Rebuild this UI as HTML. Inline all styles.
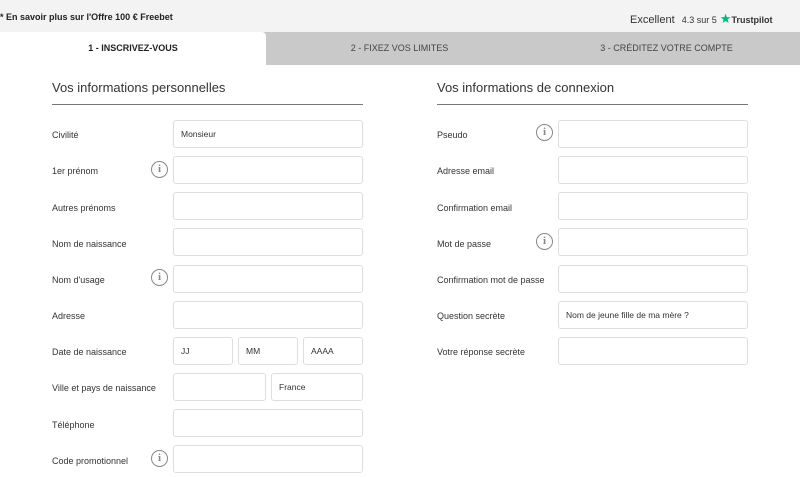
<!DOCTYPE html>
<html><head><meta charset="utf-8"><style>
*{box-sizing:border-box;margin:0;padding:0}
body{width:800px;height:477px;overflow:hidden;background:#fff;font-family:"Liberation Sans",sans-serif;color:#333;position:relative}
.top{position:absolute;left:0;top:0;width:800px;height:32px;background:#f3f3f3}
.promo{position:absolute;left:0;top:12px;font-size:9px;font-weight:bold;color:#222}
.tp{position:absolute;left:630px;top:11px;font-size:11px;color:#333}
.tp small{font-size:9px;margin-left:4px}
.tabs{position:absolute;left:0;top:32px;width:800px;height:33px;background:#c9c9c9}
.tab{position:absolute;top:0;height:33px;line-height:32px;font-size:9px;text-align:center;color:#444}
.tab.a{background:#fff;border-radius:0 4px 0 0;font-weight:bold;color:#222}
h2{position:absolute;font-weight:normal;font-size:13px;color:#333;top:80px}
.line{position:absolute;top:104px;height:1px;width:311px;background:#777}
.lab{position:absolute;font-size:9px;color:#333}
.in{position:absolute;height:28px;border:1px solid #dedede;border-radius:3px;font-size:8.5px;padding:8px 0 0 7px;color:#333}
.i{position:absolute;width:17px;height:17px;border:1.3px solid #888;border-radius:50%;font:bold 11px "Liberation Serif",serif;color:#888;text-align:center;line-height:15px;margin-top:2px}
</style></head><body>
<div class="top"></div>
<div class="promo">* En savoir plus sur l'Offre 100 € Freebet</div>
<div class="tp" style="top:11px">Excellent <small>4.3 sur 5</small> <span style="color:#00b67a;font-size:13px">★</span><b style="font-size:9px">Trustpilot</b></div>
<div class="tabs">
<div class="tab a" style="left:0;width:266px">1 - INSCRIVEZ-VOUS</div>
<div class="tab" style="left:266px;width:267px">2 - FIXEZ VOS LIMITES</div>
<div class="tab" style="left:533px;width:267px">3 - CRÉDITEZ VOTRE COMPTE</div>
</div>
<h2 style="left:52px">Vos informations personnelles</h2>
<h2 style="left:437px">Vos informations de connexion</h2>
<div class="line" style="left:52px"></div><div class="line" style="left:437px"></div>

<div class="lab" style="left:52px;top:130px">Civilité</div><div class="in" style="left:173px;top:120px;width:190px">Monsieur</div>
<div class="lab" style="left:52px;top:166px">1er prénom</div><div class="i" style="left:151px;top:159px">i</div><div class="in" style="left:173px;top:156px;width:190px"></div>
<div class="lab" style="left:52px;top:203px">Autres prénoms</div><div class="in" style="left:173px;top:192px;width:190px"></div>
<div class="lab" style="left:52px;top:239px">Nom de naissance</div><div class="in" style="left:173px;top:228px;width:190px"></div>
<div class="lab" style="left:52px;top:275px">Nom d'usage</div><div class="i" style="left:151px;top:267px">i</div><div class="in" style="left:173px;top:265px;width:190px"></div>
<div class="lab" style="left:52px;top:311px">Adresse</div><div class="in" style="left:173px;top:301px;width:190px"></div>
<div class="lab" style="left:52px;top:347px">Date de naissance</div>
<div class="in" style="left:173px;top:337px;width:60px">JJ</div><div class="in" style="left:238px;top:337px;width:60px">MM</div><div class="in" style="left:303px;top:337px;width:60px">AAAA</div>
<div class="lab" style="left:52px;top:383px">Ville et pays de naissance</div>
<div class="in" style="left:173px;top:373px;width:93px"></div><div class="in" style="left:271px;top:373px;width:92px">France</div>
<div class="lab" style="left:52px;top:420px">Téléphone</div><div class="in" style="left:173px;top:409px;width:190px"></div>
<div class="lab" style="left:52px;top:456px">Code promotionnel</div><div class="i" style="left:151px;top:448px">i</div><div class="in" style="left:173px;top:445px;width:190px"></div>

<div class="lab" style="left:437px;top:130px">Pseudo</div><div class="i" style="left:536px;top:122px">i</div><div class="in" style="left:558px;top:120px;width:190px"></div>
<div class="lab" style="left:437px;top:166px">Adresse email</div><div class="in" style="left:558px;top:156px;width:190px"></div>
<div class="lab" style="left:437px;top:203px">Confirmation email</div><div class="in" style="left:558px;top:192px;width:190px"></div>
<div class="lab" style="left:437px;top:239px">Mot de passe</div><div class="i" style="left:536px;top:231px">i</div><div class="in" style="left:558px;top:228px;width:190px"></div>
<div class="lab" style="left:437px;top:275px">Confirmation mot de passe</div><div class="in" style="left:558px;top:265px;width:190px"></div>
<div class="lab" style="left:437px;top:311px">Question secrète</div><div class="in" style="left:558px;top:301px;width:190px;padding-top:8px">Nom de jeune fille de ma mère ?</div>
<div class="lab" style="left:437px;top:347px">Votre réponse secrète</div><div class="in" style="left:558px;top:337px;width:190px"></div>
</body></html>
